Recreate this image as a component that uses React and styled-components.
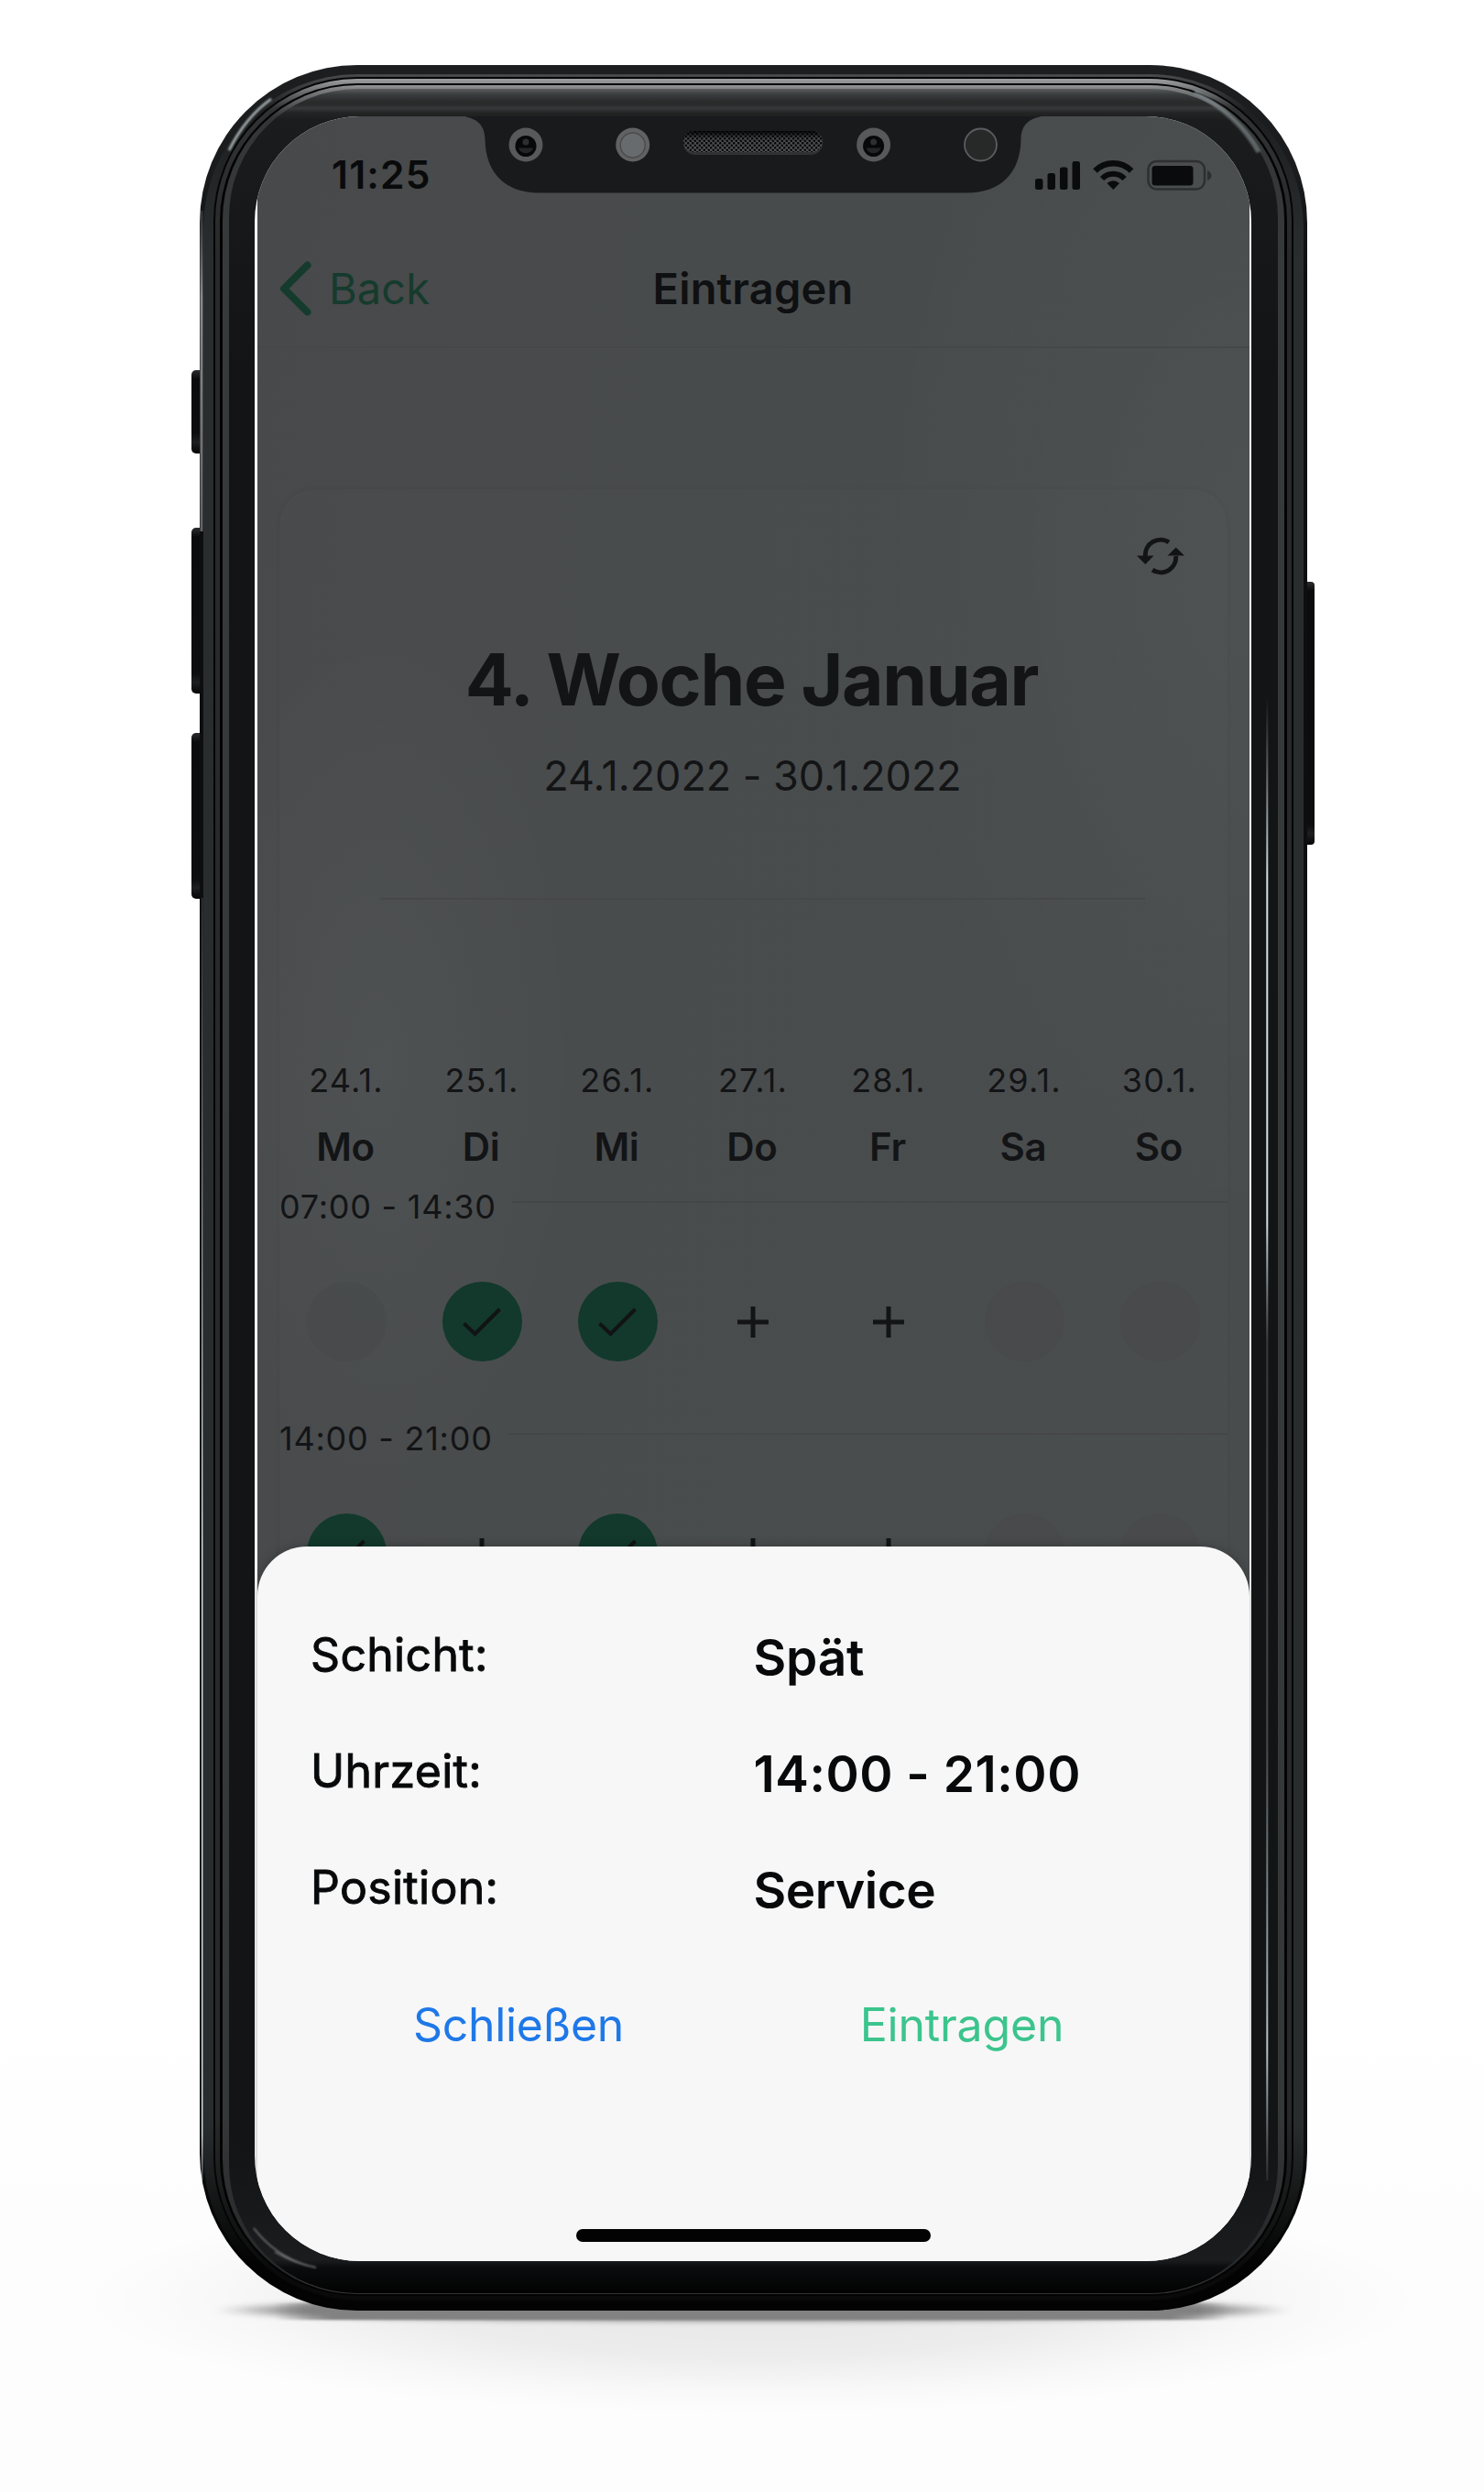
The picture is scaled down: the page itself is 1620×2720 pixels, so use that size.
import React from "react";
import styled, { createGlobalStyle, css } from "styled-components";

const GlobalStyle = createGlobalStyle`
  * { box-sizing: border-box; }
  body { margin: 0; background: #fff; }
`;

const INK = "#131416";
const GREEN = "#12392b";

const Stage = styled.main`
  position: relative;
  width: 1620px;
  height: 2720px;
  padding: 71px 193px 0 218px;
  overflow: hidden;
  background: linear-gradient(180deg, #fff 0, #fff 2200px, #fdfdfd 2420px, #fdfdfd 100%);
  font-family: "Inter", "Liberation Sans", sans-serif;
  color: ${INK};
`;

/* ---------- device ---------- */

const SoftShadow = styled.div`
  position: absolute;
  left: 90px;
  top: 2385px;
  width: 1460px;
  height: 250px;
  background: radial-gradient(closest-side, rgba(0, 0, 0, 0.09), rgba(0, 0, 0, 0.065) 50%, rgba(0, 0, 0, 0.02) 80%, transparent);
`;

const ContactShadow = styled.div`
  position: absolute;
  left: 232px;
  top: 2510px;
  width: 1180px;
  height: 23px;
  border-radius: 50%;
  background: linear-gradient(90deg, transparent, #7c7c7c 9%, #7c7c7c 91%, transparent);
  filter: blur(3px);
`;

const ContactStrip = styled.div`
  position: absolute;
  left: 300px;
  top: 2514px;
  width: 1040px;
  height: 18px;
  background: linear-gradient(90deg, transparent, #828282 6%, #828282 94%, transparent);
  filter: blur(1px);
`;

const Device = styled.div`
  position: relative;
  width: 1209px;
  height: 2451px;
`;

const SideKey = styled.span`
  position: absolute;
  ${({ $side }) => ($side === "left" ? css`left: -9px;` : css`right: -8px;`)}
  top: ${({ $top }) => $top}px;
  width: 14px;
  height: ${({ $h }) => $h}px;
  border-radius: ${({ $side }) => ($side === "left" ? "5px 0 0 5px" : "0 4px 4px 0")};
  background: linear-gradient(180deg, #2a2c2d 0, #0a0b0c 10px, #0c0d0e calc(100% - 22px), #1d1f20 calc(100% - 12px), #050505);
`;

const Ring = styled.div`
  position: relative;
  height: 100%;
  padding: ${({ $pad }) => $pad};
  border-radius: ${({ $r }) => $r}px;
  background: ${({ $bg }) => $bg};
`;

const Reflections = styled.svg`
  position: absolute;
  inset: 0;
  width: 1209px;
  height: 2451px;
  pointer-events: none;
`;

const Screen = styled.div`
  position: relative;
  height: 100%;
  padding: 0 2px 0 3px;
  overflow: hidden;
  border-radius: 115px;
  background: #fbfbfb;
`;

const Notch = styled.svg`
  position: absolute;
  left: 218px;
  top: 0;
  width: 652px;
  height: 84px;
`;

/* ---------- app ---------- */

const AppView = styled.div`
  height: 1630px;
  overflow: hidden;
  background:
    radial-gradient(220px 480px at 130px 1030px, rgba(225, 255, 250, 0.035), transparent),
    radial-gradient(420px 760px at 1083px 480px, rgba(225, 255, 250, 0.03), transparent),
    linear-gradient(100deg, #48494b 0, #484b4c 40%, #494c4d 100%);
`;

const StatusBar = styled.div`
  display: flex;
  justify-content: space-between;
  align-items: center;
  height: 127px;
  padding: 0 40px 0 81px;
`;

const Clock = styled.span`
  font-size: 42.5px;
  font-weight: 600;
  letter-spacing: 1.2px;
  color: #090a0b;
`;

const StatusIcons = styled.svg`
  width: 194px;
  height: 36px;
`;

const NavBar = styled.header`
  display: grid;
  grid-template-columns: 1fr auto 1fr;
  align-items: center;
  height: 126px;
  padding: 0 24px 3px 23px;
  border-bottom: 2px solid #454748;
`;

const BackLink = styled.a`
  display: flex;
  align-items: center;
  gap: 16px;
  font-size: 47px;
  letter-spacing: 0.1px;
  color: #153b2d;
`;

const NavTitle = styled.h1`
  margin: 0;
  font-size: 47px;
  font-weight: 600;
  letter-spacing: 0.2px;
  color: #0f1012;
`;

const Card = styled.section`
  height: 1200px;
  margin: 154px 24px 0;
  border-radius: 38px;
  background: rgba(225, 255, 250, 0.008);
  box-shadow: 0 0 5px rgba(45, 30, 30, 0.08);
`;

const CardTools = styled.div`
  display: flex;
  justify-content: flex-end;
  align-items: center;
  height: 146px;
  padding-right: 46px;
`;

const WeekTitle = styled.h2`
  margin: 12px 4px 0 0;
  font-size: 78.5px;
  line-height: 100px;
  font-weight: 700;
  letter-spacing: -1.35px;
  text-align: center;
`;

const WeekRange = styled.p`
  margin: 25px 2px 0 0;
  font-size: 45px;
  line-height: 60px;
  letter-spacing: -0.05px;
  text-align: center;
`;

const Divider = styled.hr`
  width: 835px;
  height: 2px;
  margin: 103px 0 0 110px;
  border: 0;
  background: #464748;
`;

const WeekGrid = styled.div`
  display: grid;
  grid-template-columns: repeat(7, 148px);
  justify-items: center;
  margin-left: -1px;
`;

const Dates = styled(WeekGrid)`
  margin-top: 172px;
  font-size: 36px;
  line-height: 50px;
  letter-spacing: 1.2px;
`;

const Days = styled(WeekGrid)`
  margin: 18px 0 17px -2px;
  font-size: 42px;
  line-height: 60px;
  font-weight: 600;
  letter-spacing: -0.3px;
`;

const Shift = styled.div`
  height: 253px;
`;

const ShiftHead = styled.div`
  display: flex;
  gap: 17px;
  height: 36px;
  font-size: 36px;
  line-height: 36px;
  letter-spacing: 0.75px;

  &::after {
    content: "";
    flex: 1;
    height: 2px;
    margin-top: 12px;
    background: #454647;
  }
`;

const Slots = styled(WeekGrid)`
  margin-top: 64px;
`;

const Slot = styled.div`
  display: grid;
  place-items: center;
  width: 87px;
  height: 87px;
  border-radius: 50%;
  background: ${({ $state }) => ($state === "done" ? GREEN : $state === "open" ? "transparent" : "rgba(55, 56, 58, 0.12)")};
`;

/* ---------- sheet ---------- */

const Sheet = styled.section`
  position: absolute;
  left: 3px;
  right: 2px;
  bottom: 0;
  display: flex;
  flex-direction: column;
  align-items: center;
  height: 780px;
  padding: 54px 0 21px;
  border-radius: 54px 54px 0 0;
  background: #f7f7f7;
  box-shadow: 0 0 12px rgba(0, 0, 0, 0.25);
`;

const Field = styled.div`
  display: grid;
  grid-template-columns: 1fr 1fr;
  align-items: center;
  width: 100%;
  height: 127px;
`;

const FieldLabel = styled.span`
  padding-left: ${({ $x }) => $x}px;
  font-size: 50px;
  letter-spacing: 0.3px;
  color: #08090a;
  -webkit-text-stroke: 0.9px #08090a;
`;

const FieldValue = styled.strong`
  padding: 7px 0 0;
  font-size: 55px;
  font-weight: 600;
  letter-spacing: ${({ $ls }) => $ls}px;
  color: #08090a;
`;

const Actions = styled.div`
  display: grid;
  grid-template-columns: 484px 484px;
  width: 100%;
  margin-top: 37px;
  padding-left: 43px;
`;

const Action = styled.button`
  height: 100px;
  padding: 0;
  border: 0;
  background: none;
  font: 400 50px "Inter", "Liberation Sans", sans-serif;
  letter-spacing: ${({ $ls }) => $ls}px;
  color: ${({ $color }) => $color};
`;

const HomeIndicator = styled.div`
  width: 387px;
  height: 14px;
  margin-top: auto;
  border-radius: 7px;
  background: #020202;
`;

/* ---------- drawings ---------- */

const ChevronLeft = () => (
  <svg width="39" height="62" viewBox="0 0 39 62">
    <path d="M31.500 5.500 L6 31 L31.500 56.500" fill="none" stroke="#153b2d" strokeWidth="8" strokeLinecap="round" strokeLinejoin="round" />
  </svg>
);

const RefreshIcon = () => (
  <svg width="54" height="42" viewBox="0 0 54 42">
    <g fill="none" stroke={INK} strokeWidth="5">
      <path d="M36 5.800 A16.700 16.700 0 0 0 10.300 21" />
      <path d="M18 36.200 A16.700 16.700 0 0 0 43.700 21" />
    </g>
    <path d="M1 20.500 H19.500 L10.300 30 Z M34.500 20.500 H53 L43.700 11.500 Z" fill={INK} />
  </svg>
);

const CheckIcon = () => (
  <svg width="44" height="34" viewBox="0 0 44 34">
    <path d="M2.500 18.500 L14.500 30 L41.500 3" fill="none" stroke="#111314" strokeWidth="4" />
  </svg>
);

const PlusIcon = () => (
  <svg width="36" height="36" viewBox="0 0 36 36">
    <path d="M18 1 V35 M1 18 H35" fill="none" stroke={INK} strokeWidth="5" />
  </svg>
);

const StatusGlyphs = () => (
  <StatusIcons viewBox="1130 172 194 36">
    <g fill="#0a0b0c">
      <rect x="1130" y="194" width="8.500" height="12" rx="2.500" />
      <rect x="1143.500" y="188" width="8.500" height="18" rx="2.500" />
      <rect x="1157" y="181.500" width="8.500" height="24.500" rx="2.500" />
      <rect x="1170.500" y="175" width="8.500" height="31" rx="2.500" />
      <path d="M1215.300 206 L1208.500 199 Q1215.300 193.500 1222.100 199 Z" />
      <rect x="1257.500" y="180" width="45" height="21.500" rx="3.500" />
    </g>
    <g fill="none" stroke="#0a0b0c" strokeWidth="6.500">
      <path d="M1195.500 185.500 A28 28 0 0 1 1235.100 185.500" />
      <path d="M1203 194 A17.300 17.300 0 0 1 1227.600 194" strokeWidth="6" />
    </g>
    <rect x="1253.500" y="175" width="61.500" height="30.500" rx="9" fill="none" stroke="#2d2f31" strokeWidth="2.500" />
    <path d="M1318 185 Q1322.500 187 1322.500 190.500 Q1322.500 194 1318 196 Z" fill="#2d2f31" />
  </StatusIcons>
);

const Lens = ({ x }) => (
  <g>
    <circle cx={x} cy="158" r="18.500" fill="#57595b" />
    <circle cx={x} cy="159.500" r="11.500" fill="#07080a" />
    <circle cx={x} cy="155" r="3.500" fill="#2c2f31" />
    <path d={`M${x - 8} 161.500 H${x + 8} A8.500 8.500 0 0 1 ${x - 8} 161.500 Z`} fill="#232628" />
  </g>
);

const NotchArt = () => (
  <Notch viewBox="496 127 652 84">
    <defs>
      <pattern id="mesh" width="5" height="5" patternUnits="userSpaceOnUse">
        <rect width="5" height="5" fill="#505254" />
        <circle cx="1.250" cy="1.250" r="1.300" fill="#060708" />
        <circle cx="3.750" cy="3.750" r="1.300" fill="#060708" />
      </pattern>
      <linearGradient id="meshShade" x1="0" y1="0" x2="0" y2="1">
        <stop offset="0" stopColor="#000" stopOpacity="0.9" />
        <stop offset="0.350" stopColor="#000" stopOpacity="0.150" />
        <stop offset="1" stopColor="#000" stopOpacity="0" />
      </linearGradient>
    </defs>
    <path d="M500 126 C522 128 529 137 529.500 152 C530 190 553 210.500 588 210.500 H1056 C1091 210.500 1114 190 1114.500 152 C1115 137 1122 128 1144 126 Z" fill="#191a1c" />
    <Lens x={574} />
    <circle cx="690.700" cy="158" r="18.500" fill="#606264" />
    <circle cx="690.700" cy="158.500" r="13.500" fill="#686b6d" stroke="#4a4c4e" strokeWidth="1.500" />
    <rect x="746" y="144" width="152" height="25" rx="12.500" fill="#303234" />
    <rect x="746" y="143" width="152" height="23" rx="11.500" fill="url(#mesh)" />
    <rect x="746" y="143" width="152" height="23" rx="11.500" fill="url(#meshShade)" />
    <Lens x={953.600} />
    <circle cx="1070.500" cy="158" r="17.500" fill="#272929" stroke="#5b5d5f" strokeWidth="1.800" />
  </Notch>
);

const ReflectionArt = () => (
  <Reflections viewBox="218 71 1209 2451">
    <defs>
      <filter id="soft" x="-20%" y="-20%" width="140%" height="140%">
        <feGaussianBlur stdDeviation="1.200" />
      </filter>
      <linearGradient id="left" x1="0" y1="200" x2="0" y2="620" gradientUnits="userSpaceOnUse">
        <stop offset="0" stopColor="#8a8c8f" stopOpacity="0" />
        <stop offset="0.300" stopColor="#8a8c8f" />
        <stop offset="1" stopColor="#5a5c5f" />
      </linearGradient>
      <linearGradient id="leftLow" x1="0" y1="980" x2="0" y2="2400" gradientUnits="userSpaceOnUse">
        <stop offset="0" stopColor="#c5d2d6" stopOpacity="0.200" />
        <stop offset="0.500" stopColor="#d5e2e6" />
        <stop offset="0.950" stopColor="#d5e2e6" />
        <stop offset="1" stopColor="#d5e2e6" stopOpacity="0" />
      </linearGradient>
      <linearGradient id="right" x1="0" y1="760" x2="0" y2="2400" gradientUnits="userSpaceOnUse">
        <stop offset="0" stopColor="#b8c8cc" stopOpacity="0" />
        <stop offset="0.120" stopColor="#d2e0e4" />
        <stop offset="0.350" stopColor="#d2e0e4" />
        <stop offset="0.430" stopColor="#9fb0b4" stopOpacity="0.250" />
        <stop offset="0.700" stopColor="#9fb0b4" stopOpacity="0.350" />
        <stop offset="0.900" stopColor="#b5c6ca" />
        <stop offset="1" stopColor="#b5c6ca" stopOpacity="0" />
      </linearGradient>
    </defs>
    <rect x="218.500" y="230" width="3" height="350" fill="url(#left)" />
    <rect x="220" y="980" width="1.500" height="1400" fill="url(#leftLow)" />
    <rect x="1382.300" y="760" width="2" height="1620" fill="url(#right)" />
    <g fill="none" filter="url(#soft)">
      <path d="M250 164 Q268 128 296 108" stroke="#b5bfc2" strokeWidth="2.500" />
      <path d="M1304 100 Q1352 126 1374 166" stroke="#8b9498" strokeWidth="5" opacity="0.600" />
      <path d="M277 2432 Q300 2462 336 2473" stroke="#7b8285" strokeWidth="1.300" />
      <path d="M300 2458 Q320 2470 345 2475" stroke="#7b8285" strokeWidth="1.300" />
    </g>
  </Reflections>
);

/* ---------- data ---------- */

const week = [
  ["24.1.", "Mo"],
  ["25.1.", "Di"],
  ["26.1.", "Mi"],
  ["27.1.", "Do"],
  ["28.1.", "Fr"],
  ["29.1.", "Sa"],
  ["30.1.", "So"],
];

const shifts = [
  { time: "07:00 - 14:30", slots: ["none", "done", "done", "open", "open", "none", "none"] },
  { time: "14:00 - 21:00", slots: ["done", "open", "done", "open", "open", "none", "none"] },
];

const fields = [
  { label: "Schicht:", x: 58, value: "Spät", ls: -0.2 },
  { label: "Uhrzeit:", x: 58, value: "14:00 - 21:00", ls: 0.5 },
  { label: "Position:", x: 58, value: "Service", ls: -0.5 },
];

const rings = [
  { $pad: "10px 4px 2px", $r: 172, $bg: "linear-gradient(180deg, #1d1e1f 0, #1a1b1c 120px, #0d0e0f 240px, #0d0e0f calc(100% - 180px), #020202 calc(100% - 60px))" },
  { $pad: "3px 11px 8px", $r: 168, $bg: "linear-gradient(180deg, #484a4b 0, #1d1f20 40px, #2a2d2e 200px, #292c2d calc(100% - 200px), #030303 calc(100% - 50px))" },
  { $pad: "2px", $r: 157, $bg: "#050505" },
  { $pad: "5px 5px 4px", $r: 155, $bg: "linear-gradient(180deg, #9c9ea0 0, #8b8d8f 5px, #303233 32px, #282a2a 200px, #282a2a calc(100% - 200px), #0a0a0a calc(100% - 30px))" },
  { $pad: "2px 3px", $r: 150, $bg: "#030303" },
  { $pad: "4px 7px 1px", $r: 147, $bg: "linear-gradient(180deg, #96989a 0, #7e8082 4px, #333637 34px, #363a3b 200px, #353839 calc(100% - 200px), #262728 calc(100% - 30px), #333)" },
  { $pad: "30px 29px 35px 28px", $r: 140, $bg: "linear-gradient(180deg, #5a5c5e 0, #3a3d3e 6px, #292b2b 14px, #2b2d2d 18px, #37393a 21px, #232525 26px, #1b1c1d 34px, #17181a 140px, #131416 300px, #131416 calc(100% - 160px), #1b1c1e calc(100% - 36px), #0b0c0e calc(100% - 28px), #020202)" },
];

const Rings = ({ children }) => rings.reduceRight((inner, ring) => <Ring {...ring}>{inner}</Ring>, children);

export default function App() {
  return (
    <Stage>
      <GlobalStyle />
      <SoftShadow />
      <ContactShadow />
      <ContactStrip />
      <Device>
        <SideKey $side="left" $top={333} $h={91} />
        <SideKey $side="left" $top={505} $h={181} />
        <SideKey $side="left" $top={729} $h={181} />
        <SideKey $side="right" $top={564} $h={287} />
        <Rings>
          <Screen>
            <AppView>
              <StatusBar>
                <Clock>11:25</Clock>
                <StatusGlyphs />
              </StatusBar>
              <NavBar>
                <BackLink>
                  <ChevronLeft />
                  Back
                </BackLink>
                <NavTitle>Eintragen</NavTitle>
              </NavBar>
              <Card>
                <CardTools>
                  <RefreshIcon />
                </CardTools>
                <WeekTitle>4. Woche Januar</WeekTitle>
                <WeekRange>24.1.2022 - 30.1.2022</WeekRange>
                <Divider />
                <Dates>
                  {week.map(([date]) => (
                    <span key={date}>{date}</span>
                  ))}
                </Dates>
                <Days>
                  {week.map(([, day]) => (
                    <span key={day}>{day}</span>
                  ))}
                </Days>
                {shifts.map(({ time, slots }) => (
                  <Shift key={time}>
                    <ShiftHead>{time}</ShiftHead>
                    <Slots>
                      {slots.map((state, i) => (
                        <Slot key={i} $state={state}>
                          {state === "done" && <CheckIcon />}
                          {state === "open" && <PlusIcon />}
                        </Slot>
                      ))}
                    </Slots>
                  </Shift>
                ))}
              </Card>
            </AppView>
            <Sheet>
              {fields.map(({ label, x, value, ls }) => (
                <Field key={label}>
                  <FieldLabel $x={x}>{label}</FieldLabel>
                  <FieldValue $ls={ls}>{value}</FieldValue>
                </Field>
              ))}
              <Actions>
                <Action $color="#1f78e8" $ls={-0.35}>Schließen</Action>
                <Action $color="#3cc48d" $ls={-0.2}>Eintragen</Action>
              </Actions>
              <HomeIndicator />
            </Sheet>
            <NotchArt />
          </Screen>
        </Rings>
        <ReflectionArt />
      </Device>
    </Stage>
  );
}
